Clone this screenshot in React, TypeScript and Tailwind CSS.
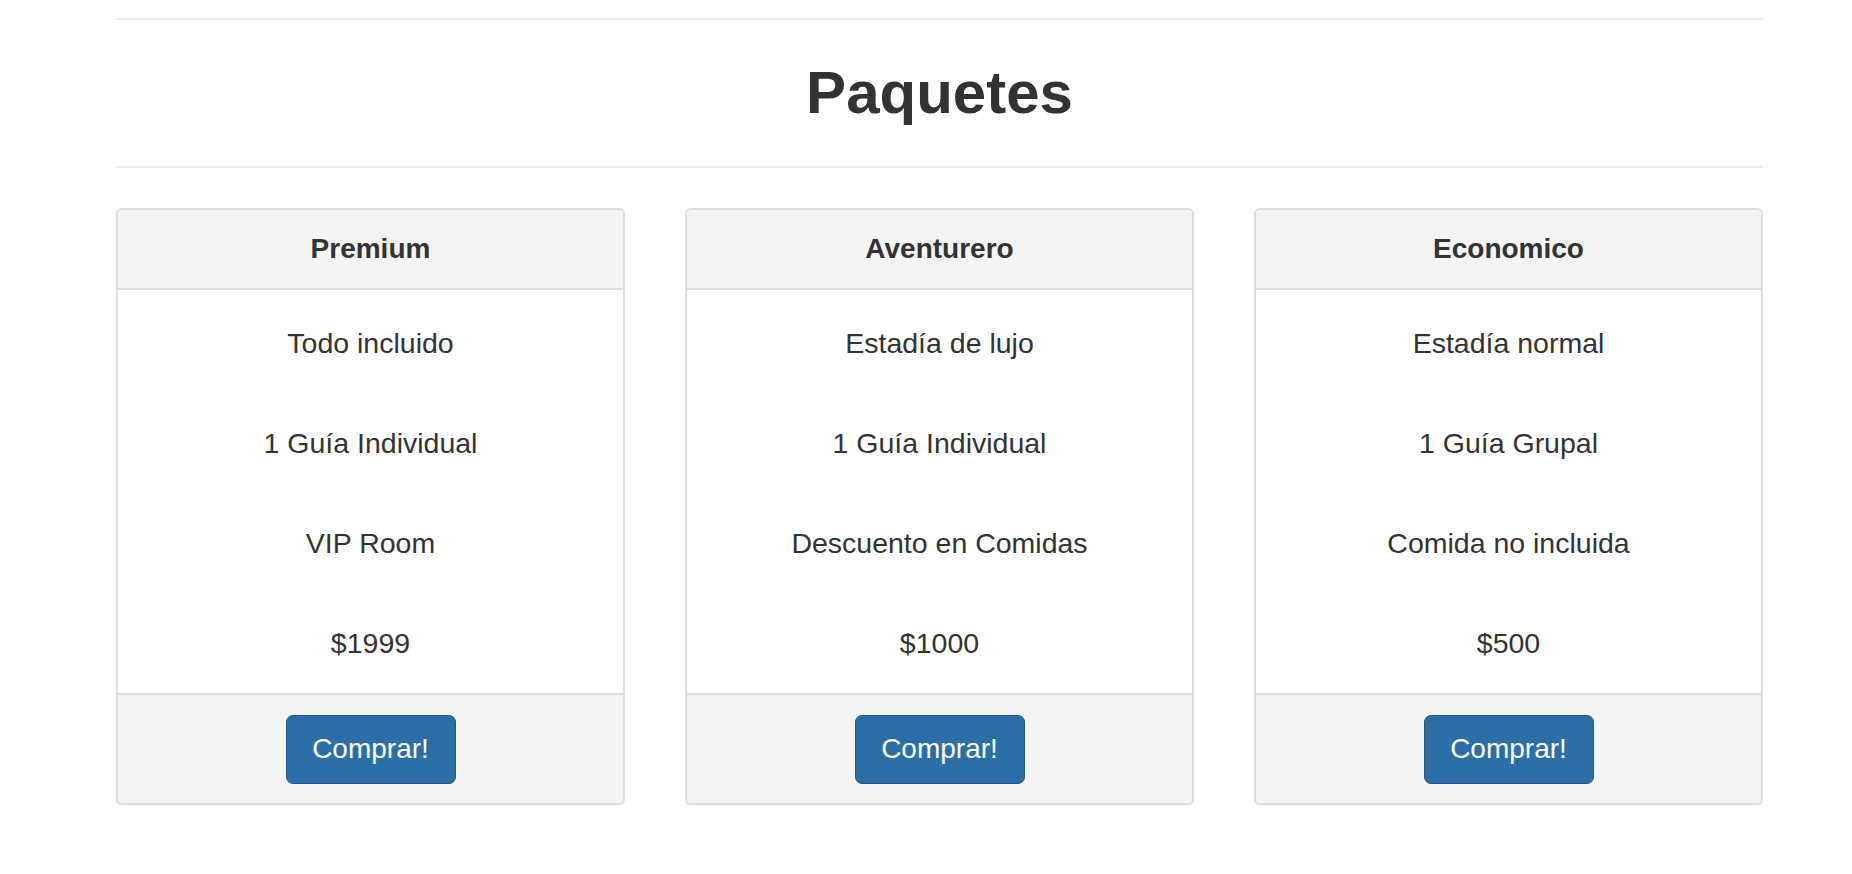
import React from "react";

const PACKAGES = [
  {
    name: "Premium",
    items: ["Todo incluido", "1 Guía Individual", "VIP Room", "$1999"],
  },
  {
    name: "Aventurero",
    items: ["Estadía de lujo", "1 Guía Individual", "Descuento en Comidas", "$1000"],
  },
  {
    name: "Economico",
    items: ["Estadía normal", "1 Guía Grupal", "Comida no incluida", "$500"],
  },
];

function PackageCard({ name, items }: { name: string; items: string[] }) {
  return (
    <div className="flex flex-col overflow-hidden rounded-[6px] border-2 border-[#dddddd] bg-white shadow-[0_1px_2px_rgba(0,0,0,0.05)]">
      <div className="flex h-[80px] items-center justify-center border-b-2 border-[#dddddd] bg-[#f4f4f4]">
        <h3 className="text-[28px] font-bold text-[#333333]">{name}</h3>
      </div>
      <div className="flex flex-col pt-[3px]">
        {items.map((item) => (
          <p
            key={item}
            className="flex h-[100px] items-center justify-center text-[28.5px] text-[#333333]"
          >
            {item}
          </p>
        ))}
      </div>
      <div className="flex h-[110px] items-center justify-center border-t-2 border-[#dddddd] bg-[#f4f4f4]">
        <button className="h-[69px] w-[170px] rounded-[7px] border border-[#25598a] bg-[#2c6ea8] text-[28px] text-white">
          Comprar!
        </button>
      </div>
    </div>
  );
}

export default function App() {
  return (
    <div
      className="min-h-screen bg-white pt-[18px]"
      style={{ fontFamily: '"Liberation Sans", Arial, sans-serif' }}
    >
      <div className="ml-[116px] w-[1647px]">
        <hr className="border-t-2 border-[#ececec]" />
        <div className="flex h-[146px] items-center justify-center">
          <h1 className="text-[60px] font-bold leading-none text-[#333333]">Paquetes</h1>
        </div>
        <hr className="border-t-2 border-[#ececec]" />
        <div className="mt-[40px] grid grid-cols-3 gap-[60px]">
          {PACKAGES.map((p) => (
            <PackageCard key={p.name} name={p.name} items={p.items} />
          ))}
        </div>
      </div>
    </div>
  );
}
